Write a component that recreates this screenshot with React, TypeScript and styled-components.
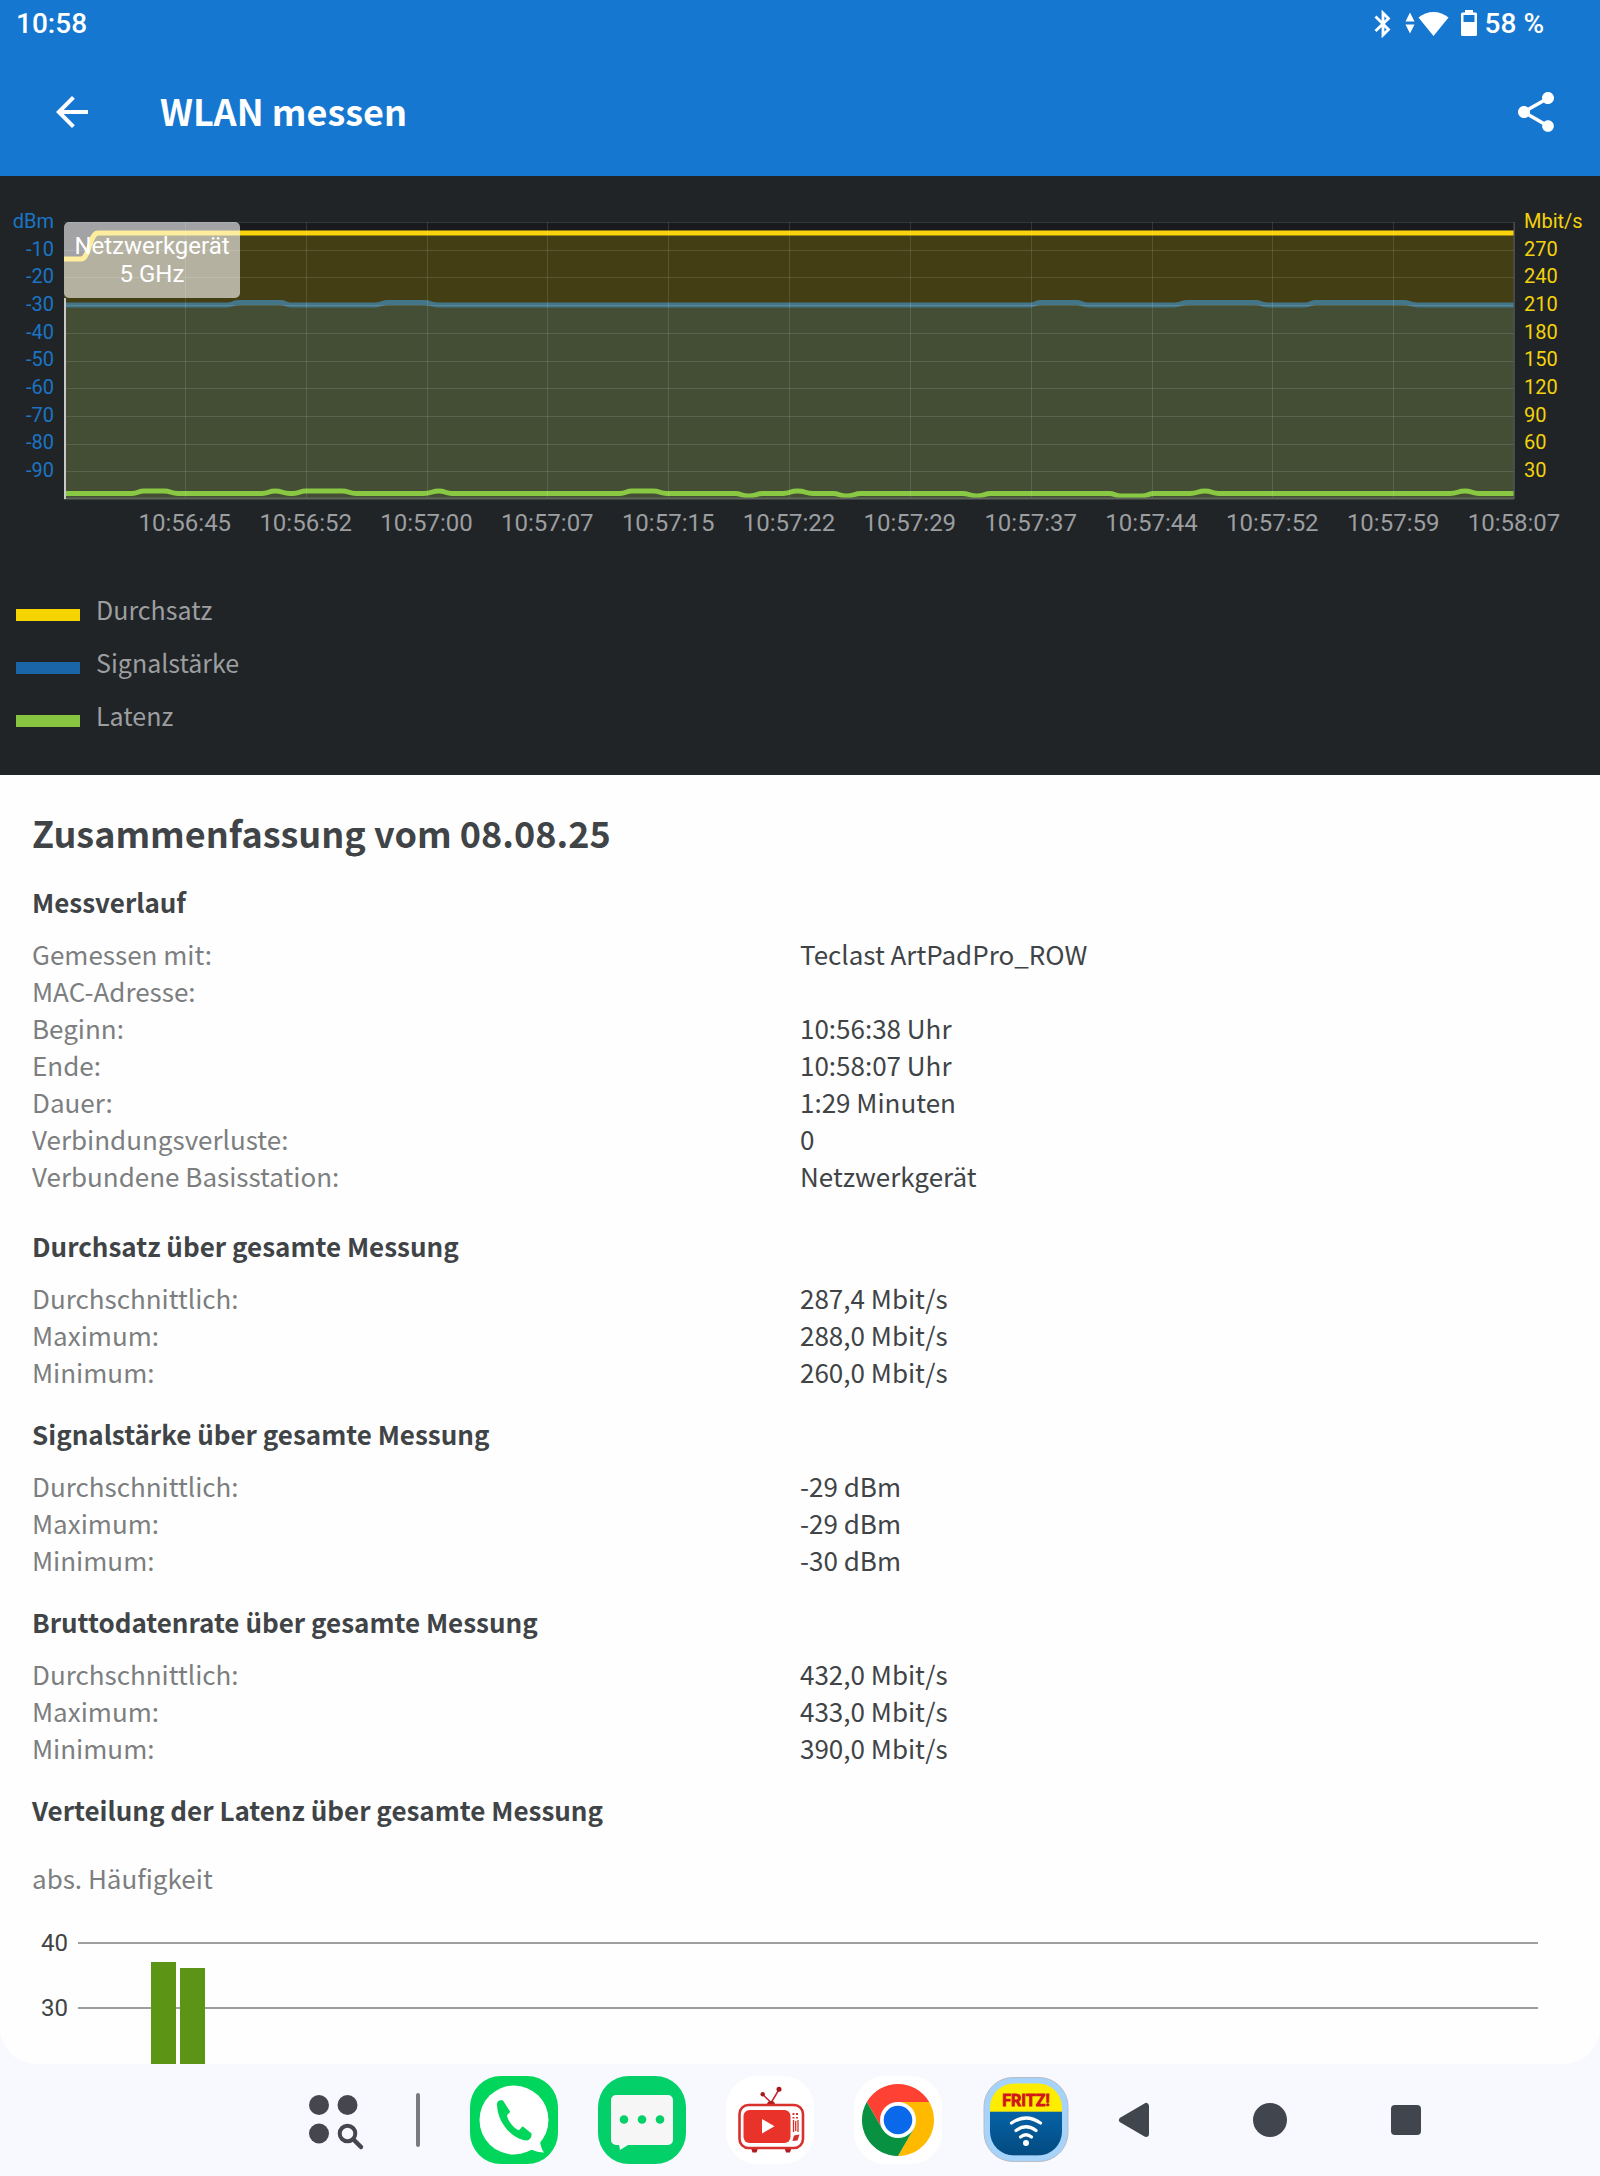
import React from "react";
import styled, { createGlobalStyle } from "styled-components";

const sans = `"Noto Sans CJK SC", "Noto Sans", sans-serif`;
const roboto = `Roboto, "Liberation Sans", sans-serif`;

const GlobalStyle = createGlobalStyle`
  *, *::before, *::after { box-sizing: border-box; }
  body { margin: 0; background: #f7f9fe; }
  h1, h2, h3, dl, dd, dt, ul, p { margin: 0; padding: 0; font-weight: inherit; }
`;

const Page = styled.div`
  height: 100vh;
  display: flex;
  flex-direction: column;
  background: #f7f9fe;
  font-family: ${sans};
`;

const Screen = styled.div`
  flex: 1;
  min-height: 0;
  overflow: hidden;
  background: #fefefe;
  border-radius: 0 0 36px 36px;
`;

const Header = styled.header`
  background: #1677d0;
  color: #fff;
`;

const StatusBar = styled.div`
  height: 48px;
  padding: 0 56px 0 16px;
  display: flex;
  align-items: center;
  justify-content: space-between;
  font: 500 28px/46px ${roboto};
`;

const StatusIcons = styled.div`
  display: flex;
  align-items: center;
  gap: 8px;
`;

const AppBar = styled.div`
  height: 128px;
  padding: 0 40px 0 48px;
  display: flex;
  align-items: center;
`;

const IconButton = styled.button`
  width: 48px;
  height: 48px;
  padding: 0;
  border: 0;
  background: none;
  color: inherit;
  display: flex;
  align-items: center;
  justify-content: center;
  flex: none;
`;

const Title = styled.h1`
  flex: 1;
  padding: 0 0 4px 64px;
  font-size: 36px;
  line-height: 48px;
  font-weight: 600;
`;

const ChartPanel = styled.section`
  background: #202427;
  padding: 31px 0 32px;
`;

const ChartGrid = styled.div`
  display: grid;
  grid-template-columns: 64px 1fr 86px;
`;

const Axis = styled.div<{ $side: "left" | "right" }>`
  height: 277px;
  display: flex;
  flex-direction: column;
  font: 400 20px/24px ${roboto};
  padding: ${(p) => (p.$side === "left" ? "0 10px 0 0" : "0 0 0 10px")};
  text-align: ${(p) => (p.$side === "left" ? "right" : "left")};
  color: ${(p) => (p.$side === "left" ? "#1c75c4" : "#f2d20c")};
`;

const AxisLabel = styled.span`
  flex: 1;
  display: flex;
  flex-direction: column;
  justify-content: center;
`;

const PlotArea = styled.div`
  position: relative;
  margin-top: 15px;
  height: 278px;
`;

const PlotSvg = styled.svg`
  display: block;
  width: 100%;
  height: 278px;
  overflow: visible;
`;

const Marker = styled.div`
  position: absolute;
  left: 0;
  top: 0;
  width: 176px;
  padding: 10px 0;
  border-radius: 5px;
  background: rgba(255, 255, 255, 0.6);
  color: #fff;
  text-align: center;
  font: 400 24px/28px ${roboto};
`;

const TimeRow = styled.div`
  grid-column: 2;
  display: grid;
  grid-template-columns: repeat(12, 1fr);
  padding-top: 7px;
  font: 400 24px/32px ${roboto};
  color: #9c9ea0;
`;

const TimeCell = styled.div`
  display: flex;
  justify-content: flex-end;
`;

const TimeLabel = styled.span`
  width: 0;
  display: flex;
  justify-content: center;
`;

const Legend = styled.ul`
  list-style: none;
  margin-top: 45px;
  padding: 0 16px;
`;

const LegendItem = styled.li`
  display: flex;
  align-items: flex-start;
  gap: 16px;
  height: 53px;
  font-size: 25px;
  line-height: 51px;
  color: #9c9ea0;
`;

const Swatch = styled.span<{ $color: string }>`
  width: 64px;
  height: 12px;
  margin-top: 25px;
  background: ${(p) => p.$color};
`;

const Summary = styled.main`
  padding: 31px 32px 0;
  color: #404447;
`;

const SummaryTitle = styled.h2`
  font-size: 36px;
  line-height: 52px;
  font-weight: 600;
  margin-bottom: 25px;
`;

const Group = styled.section<{ $gap: number }>`
  margin-bottom: ${(p) => p.$gap}px;
`;

const GroupTitle = styled.h3`
  font-size: 26px;
  line-height: 37px;
  font-weight: 600;
  margin-bottom: 15px;
`;

const Facts = styled.dl`
  font-size: 26px;
  line-height: 37px;
`;

const Fact = styled.div`
  display: grid;
  grid-template-columns: 1fr 1fr;
`;

const Term = styled.dt`
  color: #7c7e80;
`;

const Value = styled.dd`
  color: #404447;
`;

const AxisCaption = styled.p`
  padding-top: 16px;
  font-size: 26px;
  line-height: 37px;
  color: #7c7e80;
`;

const Histogram = styled.div`
  position: relative;
  margin-top: 14px;
  padding-right: 30px;
`;

const HistRow = styled.div`
  height: 65px;
  display: flex;
  align-items: center;
  gap: 10px;
  font: 400 24px/28px ${roboto};
`;

const HistLabel = styled.span`
  width: 36px;
  text-align: right;
`;

const HistLine = styled.span`
  flex: 1;
  height: 2px;
  background: #9e9e9e;
`;

const Bars = styled.div`
  position: absolute;
  left: 119px;
  top: 32px;
  height: 260px;
  display: flex;
  align-items: flex-end;
  gap: 4px;
`;

const Bar = styled.span`
  width: 25px;
  background: #5c9416;
`;

const Dock = styled.nav`
  height: 112px;
  flex: none;
  padding-left: 132px;
  display: flex;
  align-items: center;
  justify-content: center;
`;

const DockButton = styled.button<{ $width: number }>`
  width: ${(p) => p.$width}px;
  height: 88px;
  padding: 0;
  border: 0;
  background: none;
  display: flex;
  align-items: center;
  justify-content: center;
  flex: none;
`;

const Divider = styled.span`
  width: 4px;
  height: 54px;
  margin: 0 50px;
  border-radius: 2px;
  background: #7a7b80;
`;

const DockApps = styled.div`
  display: flex;
  gap: 40px;
  margin-right: 40px;
`;

const NavKeys = styled.div`
  display: flex;
  gap: 88px;
`;

/* Time series: start level followed by [fromX, toX, level] transitions. */
type Step = [number, number, number];

const PLOT_W = 1450;
const PLOT_H = 277;

const curve = (start: number, steps: Step[]) => {
  let y = start;
  let d = `M0 ${y}`;
  for (const [from, to, next] of steps) {
    const mid = (from + to) / 2;
    d += ` H${from} C${mid} ${y} ${mid} ${next} ${to} ${next}`;
    y = next;
  }
  return `${d} H${PLOT_W}`;
};

const throughput = curve(37, [[17, 34, 11]]);

const signal = curve(83, [
  [163, 175, 80.5], [216, 227, 83],
  [311, 324, 80.5], [360, 374, 83],
  [966, 977, 80.5], [1012, 1024, 83],
  [1110, 1124, 80.5], [1191, 1204, 83],
  [1241, 1252, 80.5], [1339, 1354, 83],
]);

const latency = curve(271.5, [
  [68, 80, 269], [100, 114, 271.5],
  [198, 211, 269], [211, 226, 271.5],
  [229, 242, 269], [278, 292, 271.5],
  [360, 375, 269], [375, 388, 271.5],
  [556, 568, 269], [589, 603, 271.5],
  [671, 684, 274], [685, 699, 271.5],
  [719, 733, 269], [734, 749, 271.5],
  [769, 782, 274], [783, 797, 271.5],
  [898, 913, 274], [913, 927, 271.5],
  [1045, 1057, 274], [1078, 1090, 271.5],
  [1126, 1141, 269], [1141, 1155, 271.5],
  [1386, 1401, 269], [1401, 1415, 271.5],
]);

const area = (line: string) => `${line} V${PLOT_H} H0 Z`;

const dbm = ["dBm", "-10", "-20", "-30", "-40", "-50", "-60", "-70", "-80", "-90"];
const mbit = ["Mbit/s", "270", "240", "210", "180", "150", "120", "90", "60", "30"];
const times = [
  "10:56:45", "10:56:52", "10:57:00", "10:57:07", "10:57:15", "10:57:22",
  "10:57:29", "10:57:37", "10:57:44", "10:57:52", "10:57:59", "10:58:07",
];

const legend = [
  { label: "Durchsatz", color: "#f5d400" },
  { label: "Signalstärke", color: "#1a64a8" },
  { label: "Latenz", color: "#87c540" },
];

const groups: { title: string; gap: number; rows: [string, string][] }[] = [
  {
    title: "Messverlauf",
    gap: 33,
    rows: [
      ["Gemessen mit:", "Teclast ArtPadPro_ROW"],
      ["MAC-Adresse:", ""],
      ["Beginn:", "10:56:38 Uhr"],
      ["Ende:", "10:58:07 Uhr"],
      ["Dauer:", "1:29 Minuten"],
      ["Verbindungsverluste:", "0"],
      ["Verbundene Basisstation:", "Netzwerkgerät"],
    ],
  },
  {
    title: "Durchsatz über gesamte Messung",
    gap: 25,
    rows: [
      ["Durchschnittlich:", "287,4 Mbit/s"],
      ["Maximum:", "288,0 Mbit/s"],
      ["Minimum:", "260,0 Mbit/s"],
    ],
  },
  {
    title: "Signalstärke über gesamte Messung",
    gap: 25,
    rows: [
      ["Durchschnittlich:", "-29 dBm"],
      ["Maximum:", "-29 dBm"],
      ["Minimum:", "-30 dBm"],
    ],
  },
  {
    title: "Bruttodatenrate über gesamte Messung",
    gap: 25,
    rows: [
      ["Durchschnittlich:", "432,0 Mbit/s"],
      ["Maximum:", "433,0 Mbit/s"],
      ["Minimum:", "390,0 Mbit/s"],
    ],
  },
];

const ticks = [40, 30, 20];
const counts = [37, 36];

const StatusGlyphs = () => (
  <svg width="104" height="28" viewBox="0 0 104 28" fill="#fff" aria-hidden="true">
    <path d="M2.500 6.500 L15.500 19.500 L10 25 V3 L15.500 8.500 L2.500 21" fill="none" stroke="#fff" strokeWidth="2.800" />
    <path d="M32.500 11.500 L37 2.500 L41.500 11.500 Z M32.500 14.500 H41.500 L37 23.500 Z" />
    <path d="M45.500 7.500 C54 0 67 0 75.500 7.500 L60.500 26 Z" />
    <path
      fillRule="evenodd"
      d="M92 0 h8 v2.500 h2.500 a1.500 1.500 0 0 1 1.500 1.500 V24.500 a1.500 1.500 0 0 1 -1.500 1.500 H89.500 a1.500 1.500 0 0 1 -1.500 -1.500 V4 a1.500 1.500 0 0 1 1.500 -1.500 H92 Z M90.500 5 V12 H101.500 V5 Z"
    />
  </svg>
);

const BackIcon = () => (
  <svg width="48" height="48" viewBox="0 0 24 24" fill="currentColor" aria-hidden="true">
    <path d="M20 11H7.830l5.590-5.590L12 4l-8 8 8 8 1.410-1.410L7.830 13H20v-2z" />
  </svg>
);

const ShareIcon = () => (
  <svg width="48" height="48" viewBox="0 0 24 24" fill="currentColor" aria-hidden="true">
    <path d="M18 16.080c-.76 0-1.440.3-1.960.77L8.910 12.700c.05-.23.09-.46.09-.7s-.04-.47-.09-.7l7.050-4.110c.54.5 1.250.81 2.040.81 1.660 0 3-1.340 3-3s-1.340-3-3-3-3 1.340-3 3c0 .24.040.47.090.7L8.040 9.810C7.500 9.310 6.790 9 6 9c-1.660 0-3 1.340-3 3s1.340 3 3 3c.79 0 1.500-.31 2.040-.81l7.120 4.160c-.05.21-.08.43-.08.65 0 1.610 1.310 2.920 2.920 2.920s2.920-1.310 2.920-2.920-1.310-2.920-2.920-2.920z" />
  </svg>
);

const AllAppsIcon = () => (
  <svg width="64" height="88" viewBox="0 0 64 88" fill="#45464e" aria-hidden="true">
    <circle cx="17" cy="29" r="10" />
    <circle cx="45.500" cy="29" r="10" />
    <circle cx="17" cy="57.500" r="10" />
    <circle cx="45.500" cy="57.500" r="7.800" fill="none" stroke="#45464e" strokeWidth="4" />
    <path d="M51.500 63.500 L59 71" stroke="#45464e" strokeWidth="4.500" strokeLinecap="round" />
  </svg>
);

const PhoneAppIcon = () => (
  <svg width="88" height="88" viewBox="0 0 88 88" aria-hidden="true">
    <rect width="88" height="88" rx="31" fill="#00d65b" />
    <circle cx="44" cy="44" r="34.500" fill="#fff" />
    <path d="M60 73 Q68 76.500 74 76.500 Q70 71 70 63 Z" fill="#fff" />
    <path
      d="M27 28 C27 24.500 30 23.500 33 24.500 L40 35.500 C40.500 37 37 38 37 40 C38.500 46 43 51 48 54 C50 55 51.500 50 53 50.500 L61.500 57.500 C62 61 60 64 57 64.500 C42 63.500 27 46 27 28 Z"
      fill="#00d65b"
    />
  </svg>
);

const MessagesIcon = () => (
  <svg width="88" height="88" viewBox="0 0 88 88" aria-hidden="true">
    <rect width="88" height="88" rx="31" fill="#03d069" />
    <path d="M18 19 H70 a5 5 0 0 1 5 5 V64 a5 5 0 0 1 -5 5 H30 L22 74 L21 69 H18 a5 5 0 0 1 -5 -5 V24 a5 5 0 0 1 5 -5 Z" fill="#f5f6f5" />
    <circle cx="26" cy="43.500" r="4.300" fill="#03d069" />
    <circle cx="44" cy="43.500" r="4.300" fill="#03d069" />
    <circle cx="62" cy="43.500" r="4.300" fill="#03d069" />
  </svg>
);

const TvIcon = () => (
  <svg width="88" height="88" viewBox="0 0 88 88" aria-hidden="true">
    <rect width="88" height="88" rx="31" fill="#fff" />
    <path d="M44.500 26 L36.700 18.500 M45.500 26 L53 13.500" stroke="#c8232a" strokeWidth="1.500" />
    <circle cx="36.700" cy="18.300" r="2.200" fill="#a9161c" />
    <circle cx="53" cy="13.300" r="2.500" fill="#a9161c" />
    <path d="M41 28 Q41.500 25 45 25 Q48.500 25 49 28 Z M25 72 H32 L30.500 76.500 H26.500 Z M58.500 72 H65.500 L64 76.500 H60 Z" fill="#b01c20" />
    <rect x="13.500" y="29" width="63.500" height="43" rx="9" fill="#fff" stroke="#d8302c" strokeWidth="2.600" />
    <rect x="17.500" y="34" width="47" height="33" rx="6" fill="#e9332a" />
    <path d="M36 43 L48.500 50.200 L36 57.400 Z" fill="#fff" />
    <path d="M66.500 37 h2 v2 h-2 Z M70 37 h2 v2 h-2 Z M66.500 41 h2 v1.500 h-2 Z M70 41 h2 v1.500 h-2 Z" fill="#d8302c" />
    <path d="M67.500 44 V56 M69.700 45 V55 M72 44 V56" stroke="#d8302c" strokeWidth="1.300" />
    <path d="M68 59.500 L73.500 58.500 L71.500 64.500 L66.500 65 Z" fill="#d8302c" />
  </svg>
);

const ChromeIcon = () => (
  <svg width="88" height="88" viewBox="0 0 88 88" aria-hidden="true">
    <rect width="88" height="88" rx="31" fill="#fff" />
    <path d="M12.800 26 A36 36 0 0 1 75.200 26 H44 L28.400 53 Z" fill="#ff4133" />
    <path d="M75.200 26 A36 36 0 0 1 44 80 L59.600 53 L44 26 Z" fill="#ffba00" />
    <path d="M44 80 A36 36 0 0 1 12.800 26 L28.400 53 L59.600 53 Z" fill="#079141" />
    <circle cx="44" cy="44" r="18" fill="#fff" />
    <circle cx="44" cy="44" r="14.300" fill="#0a69ea" />
  </svg>
);

const FritzText = styled.text`
  font: 700 16px "Liberation Sans Narrow", Roboto, sans-serif;
`;

const FritzIcon = () => (
  <svg width="88" height="88" viewBox="0 0 88 88" aria-hidden="true">
    <defs>
      <linearGradient id="fritz-blue" x1="0" y1="0" x2="0" y2="1">
        <stop offset="0" stopColor="#0663a6" />
        <stop offset="1" stopColor="#034a80" />
      </linearGradient>
      <clipPath id="fritz-inner">
        <rect x="8" y="7.500" width="72" height="72" rx="24" />
      </clipPath>
    </defs>
    <rect x="2" y="1.500" width="84" height="84" rx="29" fill="#a5d3fa" stroke="#b9bcc4" />
    <g clipPath="url(#fritz-inner)">
      <rect x="8" y="7" width="72" height="29" fill="#ffed00" />
      <rect x="8" y="35.700" width="72" height="44" fill="url(#fritz-blue)" />
    </g>
    <FritzText x="44" y="30" textAnchor="middle" fill="#d0151c" stroke="#d0151c" strokeWidth="0.800">
      FRITZ!
    </FritzText>
    <g fill="none" stroke="#fff" strokeWidth="3.200" strokeLinecap="round">
      <path d="M29.500 47 Q44 37 58.500 47" />
      <path d="M34 54.500 Q44 47 54 54.500" />
      <path d="M38.500 61 Q44 56.500 49.500 61" />
    </g>
    <circle cx="44" cy="67" r="3" fill="#fff" />
  </svg>
);

const MeasurementChart = () => (
  <PlotArea>
    <PlotSvg viewBox={`0 0 ${PLOT_W} 278`} preserveAspectRatio="none" role="img" aria-label="WLAN-Messung">
      <rect width={PLOT_W} height={PLOT_H} fill="#191a1e" />
      <path d={area(throughput)} fill="#443e15" />
      <path d={area(signal)} fill="#434e34" />
      <path d={throughput} fill="none" stroke="#f9d30b" strokeWidth="5" />
      <path d={signal} fill="none" stroke="#44768a" strokeWidth="5" />
      <path d={latency} fill="none" stroke="#89c843" strokeWidth="5" />
      <g stroke="#fff" strokeOpacity="0.12" strokeWidth="1">
        {dbm.map((label, i) => (
          <line key={label} x1="0" x2={PLOT_W} y1={Math.round(i * 27.7) + 0.5} y2={Math.round(i * 27.7) + 0.5} />
        ))}
        {times.map((label, i) => {
          const x = Math.round(((i + 1) * PLOT_W) / 12) + 0.5;
          return <line key={label} x1={x} x2={x} y1="0" y2={PLOT_H} />;
        })}
      </g>
      <path d={`M0 276.500 H${PLOT_W}`} stroke="#5d6458" strokeWidth="2" />
      <path d={`M${PLOT_W} 0 V${PLOT_H}`} stroke="#55595a" strokeWidth="1" />
      <path d="M1 76 V277" stroke="#c9cac8" strokeWidth="2" />
    </PlotSvg>
    <Marker>
      Netzwerkgerät
      <br />5 GHz
    </Marker>
  </PlotArea>
);

export default function App() {
  return (
    <>
      <GlobalStyle />
      <Page>
        <Screen>
          <Header>
            <StatusBar>
              <span>10:58</span>
              <StatusIcons>
                <StatusGlyphs />
                <span>58 %</span>
              </StatusIcons>
            </StatusBar>
            <AppBar>
              <IconButton type="button" aria-label="Zurück">
                <BackIcon />
              </IconButton>
              <Title>WLAN messen</Title>
              <IconButton type="button" aria-label="Teilen">
                <ShareIcon />
              </IconButton>
            </AppBar>
          </Header>

          <ChartPanel>
            <ChartGrid>
              <Axis $side="left">
                {dbm.map((label) => (
                  <AxisLabel key={label}>{label}</AxisLabel>
                ))}
              </Axis>
              <MeasurementChart />
              <Axis $side="right">
                {mbit.map((label) => (
                  <AxisLabel key={label}>{label}</AxisLabel>
                ))}
              </Axis>
              <TimeRow>
                {times.map((time) => (
                  <TimeCell key={time}>
                    <TimeLabel>{time}</TimeLabel>
                  </TimeCell>
                ))}
              </TimeRow>
            </ChartGrid>
            <Legend>
              {legend.map(({ label, color }) => (
                <LegendItem key={label}>
                  <Swatch $color={color} />
                  {label}
                </LegendItem>
              ))}
            </Legend>
          </ChartPanel>

          <Summary>
            <SummaryTitle>Zusammenfassung vom 08.08.25</SummaryTitle>
            {groups.map(({ title, gap, rows }) => (
              <Group key={title} $gap={gap}>
                <GroupTitle>{title}</GroupTitle>
                <Facts>
                  {rows.map(([term, value]) => (
                    <Fact key={term}>
                      <Term>{term}</Term>
                      <Value>{value}</Value>
                    </Fact>
                  ))}
                </Facts>
              </Group>
            ))}
            <GroupTitle>Verteilung der Latenz über gesamte Messung</GroupTitle>
            <AxisCaption>abs. Häufigkeit</AxisCaption>
            <Histogram>
              {ticks.map((tick) => (
                <HistRow key={tick}>
                  <HistLabel>{tick}</HistLabel>
                  <HistLine />
                </HistRow>
              ))}
              <Bars>
                {counts.map((count) => (
                  <Bar key={count} style={{ height: `${(count / 40) * 100}%` }} />
                ))}
              </Bars>
            </Histogram>
          </Summary>
        </Screen>

        <Dock>
          <DockButton type="button" $width={64} aria-label="Alle Apps">
            <AllAppsIcon />
          </DockButton>
          <Divider />
          <DockApps>
            <DockButton type="button" $width={88} aria-label="Telefon">
              <PhoneAppIcon />
            </DockButton>
            <DockButton type="button" $width={88} aria-label="Nachrichten">
              <MessagesIcon />
            </DockButton>
            <DockButton type="button" $width={88} aria-label="TV">
              <TvIcon />
            </DockButton>
            <DockButton type="button" $width={88} aria-label="Chrome">
              <ChromeIcon />
            </DockButton>
            <DockButton type="button" $width={88} aria-label="FRITZ!App WLAN">
              <FritzIcon />
            </DockButton>
          </DockApps>
          <NavKeys>
            <DockButton type="button" $width={48} aria-label="Zurück">
              <svg width="48" height="48" viewBox="0 0 48 48" fill="#41464e" aria-hidden="true">
                <path d="M12 24 L36 10 V38 Z" stroke="#41464e" strokeWidth="6" strokeLinejoin="round" />
              </svg>
            </DockButton>
            <DockButton type="button" $width={48} aria-label="Startbildschirm">
              <svg width="48" height="48" viewBox="0 0 48 48" fill="#41464e" aria-hidden="true">
                <circle cx="24" cy="24" r="17" />
              </svg>
            </DockButton>
            <DockButton type="button" $width={48} aria-label="Letzte Apps">
              <svg width="48" height="48" viewBox="0 0 48 48" fill="#41464e" aria-hidden="true">
                <rect x="9" y="9" width="30" height="30" rx="4" />
              </svg>
            </DockButton>
          </NavKeys>
        </Dock>
      </Page>
    </>
  );
}
